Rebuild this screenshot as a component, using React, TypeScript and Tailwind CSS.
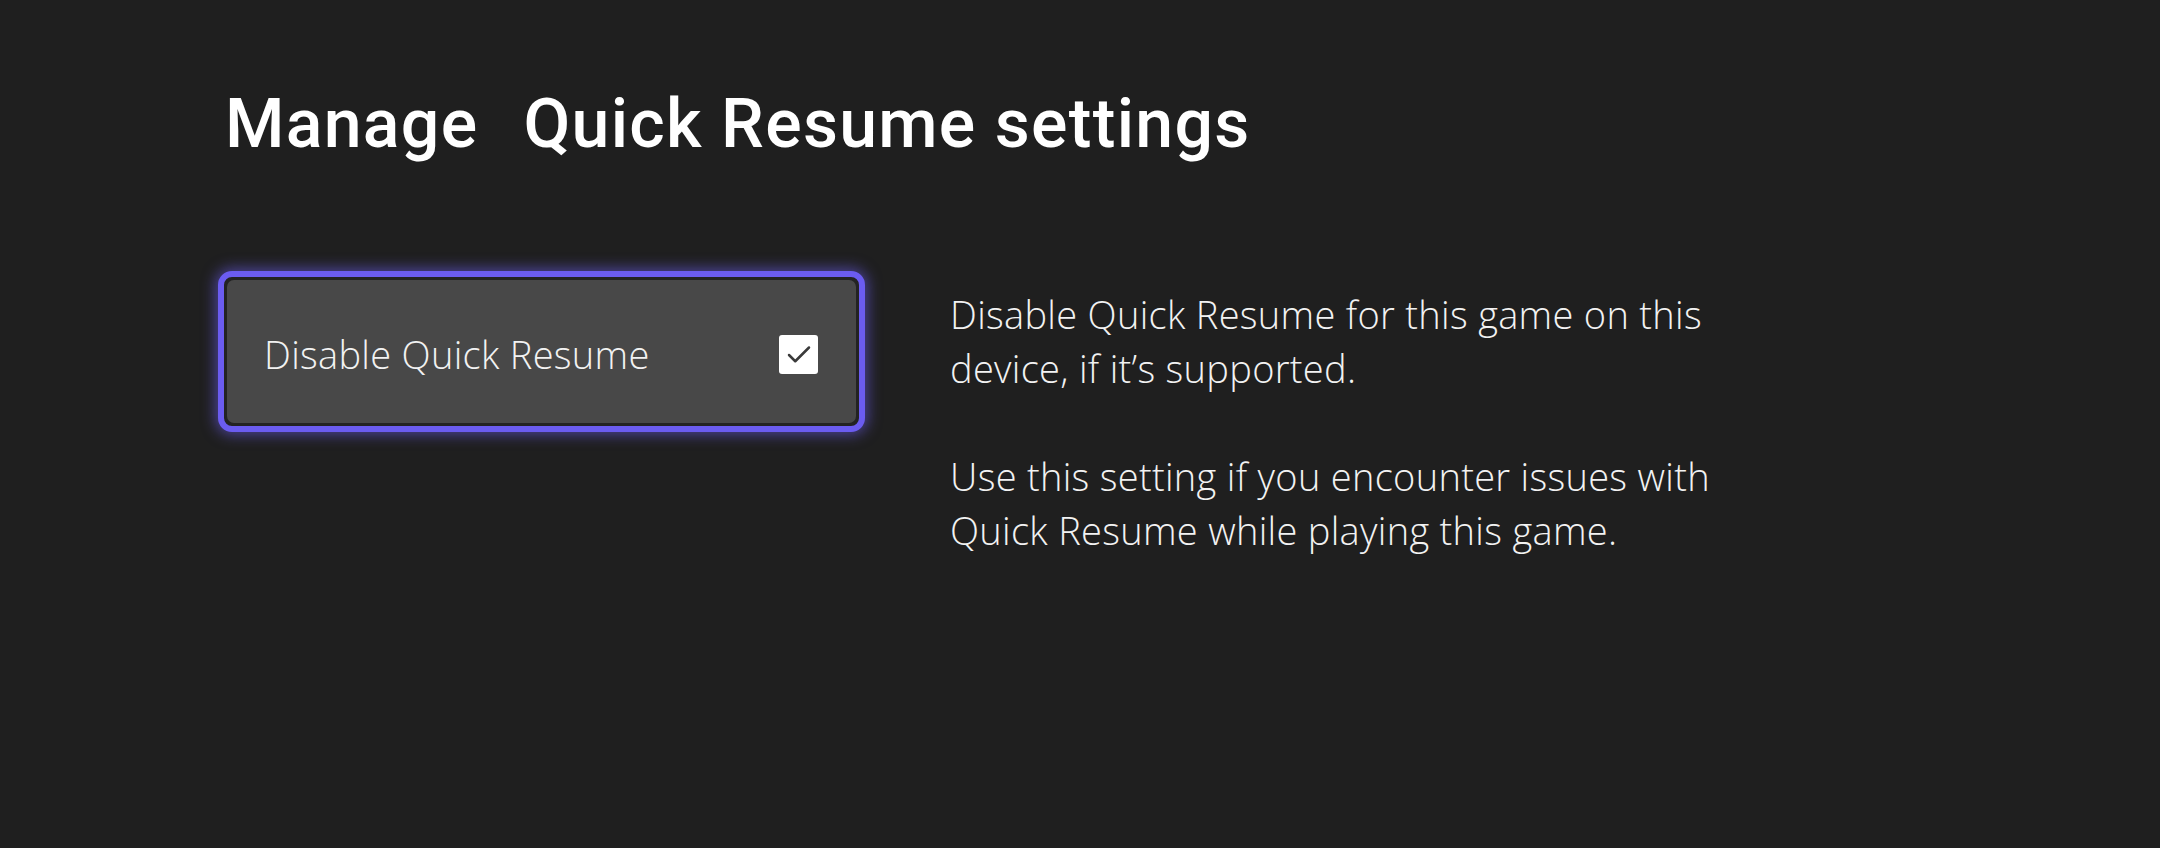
import { Check } from 'lucide-react'

export default function App() {
  return (
    <div className="w-full h-[848px] bg-[#1f1f1f] text-white pl-[225px] pt-[84px] overflow-hidden">
      <h1 className="font-['Roboto',sans-serif] font-medium text-[68px] leading-[80px] tracking-[1.3px] whitespace-nowrap">
        <span>Manage</span>
        <span className="ml-[45px]">Quick Resume settings</span>
      </h1>

      <div className="flex items-start mt-[107px] -ml-[7px]">
        {/* focused option */}
        <div className="w-[647px] h-[161px] rounded-[14px] border-[6px] border-[#6b5cf0] p-[3px] bg-[#232323] shadow-[0_0_14px_3px_rgba(107,92,240,0.55)] shrink-0">
          <div className="h-full rounded-[7px] bg-[#484848] flex items-center justify-between pl-[37px] pr-[38px] pt-[6px]">
            <span className="font-['Open_Sans',sans-serif] font-light text-[38px] leading-none tracking-[0.3px] text-[#f2f2f2] pb-[2px]">
              Disable Quick Resume
            </span>
            <div className="w-[39px] h-[39px] rounded-[3px] bg-white flex items-center justify-center">
              <Check size={30} strokeWidth={2} className="text-[#3a3a3a]" />
            </div>
          </div>
        </div>

        <div className="ml-[85px] mt-[16px] font-['Open_Sans',sans-serif] font-light text-[38px] leading-[54px] tracking-[0.3px] text-[#f2f2f2] whitespace-nowrap">
          <p>Disable Quick Resume for this game on this<br />device, if it’s supported.</p>
          <p className="mt-[54px]">Use this setting if you encounter issues with<br />Quick Resume while playing this game.</p>
        </div>
      </div>
    </div>
  )
}
